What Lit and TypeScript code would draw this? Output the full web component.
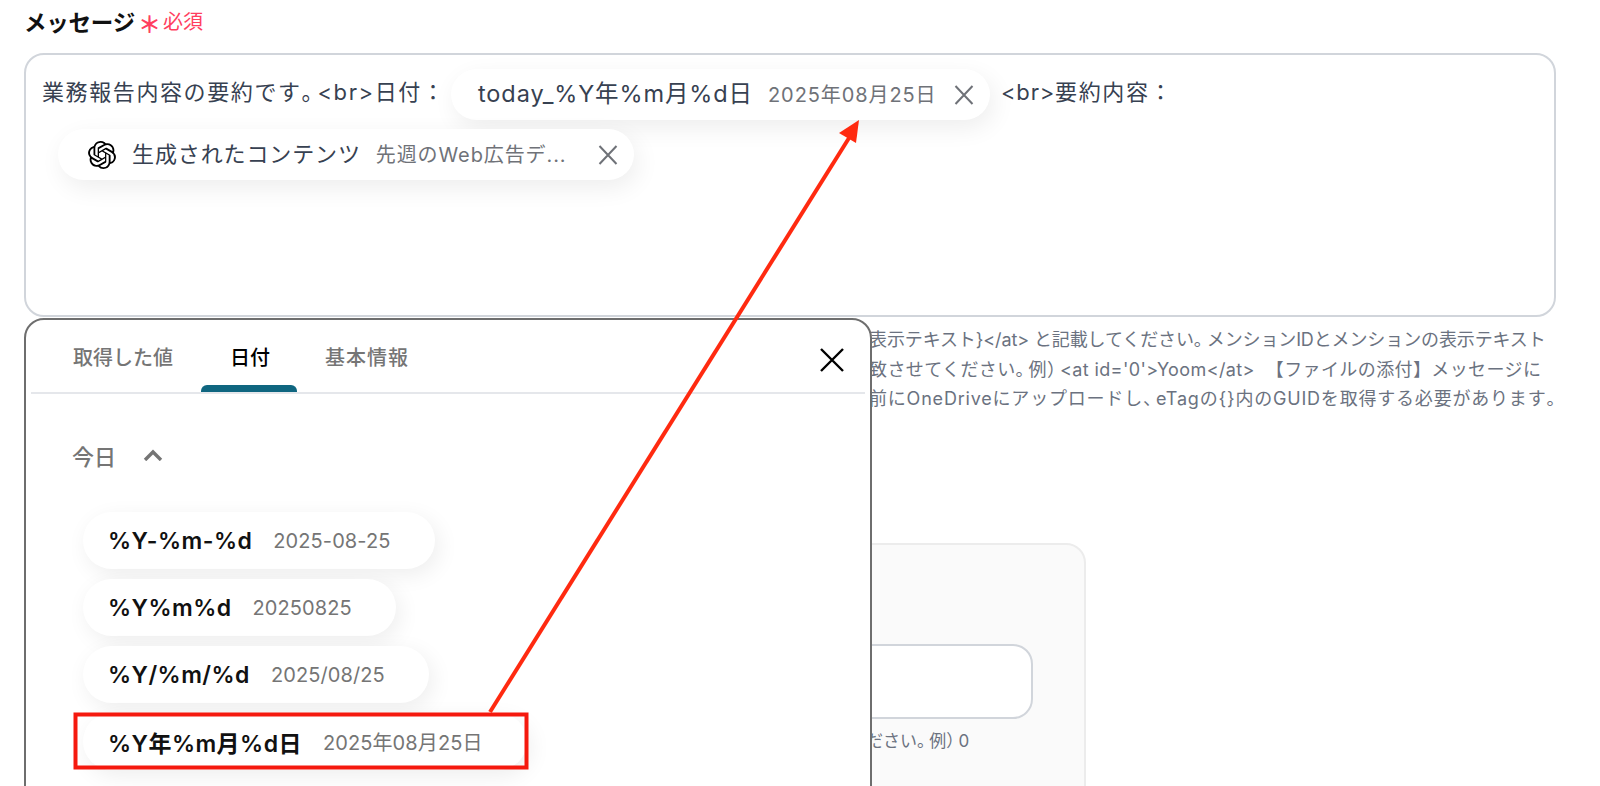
import { LitElement, html, css } from "lit";
import { customElement } from "lit/decorators.js";

const xIcon = (cls: string) => html`<svg class=${cls} viewBox="0 0 20 20" fill="none" stroke="currentColor" stroke-width="2"><path d="M1.5 1 L18.5 19 M18.5 1 L1.5 19"/></svg>`;
const pills = [
  ["%Y-%m-%d", "2025-08-25"],
  ["%Y%m%d", "20250825"],
  ["%Y/%m/%d", "2025/08/25"],
  ["%Y年%m月%d日", "2025年08月25日"],
];

@customElement("app-root")
export class AppRoot extends LitElement {
  static styles = css`
    :host { display: block; position: relative; width: 1600px; height: 786px; overflow: hidden; background: #fff;
      font-family: Inter, "Noto Sans CJK JP", sans-serif; color: #374151; }
    .label { display: flex; align-items: center; height: 53px; padding: 0 0 12px 24px; box-sizing: border-box; }
    .label b { font-size: 22.5px; font-weight: 700; color: #111; letter-spacing: -.01em; }
    .aster { color: #ff3f5f; font-size: 23px; line-height: 20px; margin: 8px 2px 0 3px; font-weight: 700; }
    .req { color: #ff3f5f; font-size: 20px; }
    .box { margin-left: 24px; width: 1532px; height: 264px; box-sizing: border-box; border: 2px solid #d1d5db; border-radius: 20px;
      padding: 14px 16px; }
    .line1 { display: flex; align-items: flex-start; height: 52px; font-size: 22px; line-height: 47px; letter-spacing: 1.6px; white-space: nowrap; }
    .lead { flex: none; width: 409px; }
    .la { letter-spacing: .8px; }
    .p { letter-spacing: -.28em; }
    .line2 { margin-top: 8px; padding-left: 16px; display: flex; }
    .chip { display: inline-flex; align-items: center; height: 51px; border-radius: 26px; background: #fff; box-sizing: border-box;
      box-shadow: 4px 8px 24px rgba(0,0,0,.07); letter-spacing: 0; flex: none; }
    .c1 { width: 539px; margin: 0 11px 0 0; padding-left: 27px; }
    .c2 { width: 576px; padding-left: 30px; }
    .ct { font-size: 22px; letter-spacing: .88px; color: #374151; margin-bottom: 1px; line-height: 30px; }
    .c1 .ct { font-size: 23.5px; letter-spacing: .9px; }
    .cv { font-size: 20px; letter-spacing: .9px; color: #6f7278; margin: 0 0 0 15px; line-height: 30px; }
    .c1 .x { margin-left: 18px; }
    .c2 .x { margin-left: 31px; }
    .c2 svg.logo { width: 28px; height: 28px; margin-right: 16px; color: #000; }
    .x { width: 20px; height: 20px; color: #6f7278; flex: none; }
    .help { margin: 8px 0 0 869px; font-size: 18px; line-height: 29.5px; color: #6b7280; white-space: nowrap; }
    .l1 { letter-spacing: -.12px; }
    .l2 { letter-spacing: .39px; }
    .l3 { letter-spacing: .8px; }
    .card { position: absolute; left: 24px; top: 543px; width: 1062px; height: 300px; box-sizing: border-box;
      background: #fafafa; border: 2px solid #ececec; border-radius: 20px; display: flex; flex-direction: column; align-items: flex-end; padding: 99px 51px 0 0; }
    .input { width: 500px; height: 75px; background: #fff; border: 2px solid #d1d5db; border-radius: 20px; box-sizing: border-box; flex: none; }
    .hint { align-self: flex-start; margin: 8px 0 0 840px; font-size: 17px; color: #6b7280; white-space: nowrap; line-height: 28px; }
    .panel { position: absolute; left: 24px; top: 318px; width: 848px; height: 500px; box-sizing: border-box; background: #fff;
      border: 2px solid #6e6e6e; border-radius: 20px; }
    .tabs { display: flex; align-items: flex-start; margin: 0 5px; height: 72px; border-bottom: 2px solid #e5e7eb; padding-left: 42px; position: relative; }
    .tab { font-size: 20px; font-weight: 500; color: #757575; margin-top: 23px; line-height: 30px; white-space: nowrap; }
    .tab.on { color: #000; margin-left: 57px; margin-right: 55px; position: relative; }
    .tab.on::after { content: ""; position: absolute; left: -29px; right: -27px; top: 42px; height: 7px; background: #0f6680; border-radius: 6px 6px 0 0; }
    .tab.wide { letter-spacing: 1px; }
    .close { position: absolute; right: 26px; top: 28px; width: 24px; height: 24px; color: #000; }
    .today { display: flex; align-items: center; margin: 46px 0 0 46px; height: 30px; font-size: 22px; font-weight: 500; color: #757575; }
    .today svg { width: 20px; height: 12px; margin-left: 27px; }
    .list { margin: 42px 0 0 57px; display: flex; flex-direction: column; align-items: flex-start; gap: 10px; }
    .pill { display: flex; align-items: center; height: 57px; padding: 0 44px 0 25px; border-radius: 29px; background: #fff;
      box-shadow: 4px 6px 22px rgba(0,0,0,.07); white-space: nowrap; }
    .pill b { font-size: 23px; font-weight: 600; color: #111; letter-spacing: .02em; }
    .pill span { font-size: 20px; color: #757575; margin: 0 0 0 21px; letter-spacing: .1px; }
    .overlay { position: absolute; inset: 0; width: 1600px; height: 786px; pointer-events: none; }
  `;

  render() {
    return html`
      <div class="label"><b>メッセージ</b><span class="aster">＊</span><span class="req">必須</span></div>
      <div class="box">
        <div class="line1">
          <span class="lead">業務報告内容の要約です<span class="p">。</span>&lt;br&gt;日付<span class="p">：</span></span>
          <span class="chip c1"><span class="ct">today_%Y年%m月%d日</span><span class="cv">2025年08月25日</span>${xIcon("x")}</span>
          <span><span class="la">&lt;br&gt;</span>要約内容：</span>
        </div>
        <div class="line2">
          <span class="chip c2">
            <svg class="logo" viewBox="0 0 24 24" fill="currentColor"><path d="M22.2819 9.8211a5.9847 5.9847 0 0 0-.5157-4.9108 6.0462 6.0462 0 0 0-6.5098-2.9A6.0651 6.0651 0 0 0 4.9807 4.1818a5.9847 5.9847 0 0 0-3.9977 2.9 6.0462 6.0462 0 0 0 .7427 7.0966 5.98 5.98 0 0 0 .511 4.9107 6.051 6.051 0 0 0 6.5146 2.9001A5.9847 5.9847 0 0 0 13.2599 24a6.0557 6.0557 0 0 0 5.7718-4.2058 5.9894 5.9894 0 0 0 3.9977-2.9001 6.0557 6.0557 0 0 0-.7475-7.0729zm-9.022 12.6081a4.4755 4.4755 0 0 1-2.8764-1.0408l.1419-.0804 4.7783-2.7582a.7948.7948 0 0 0 .3927-.6813v-6.7369l2.02 1.1686a.071.071 0 0 1 .038.052v5.5826a4.504 4.504 0 0 1-4.4945 4.4944zm-9.6607-4.1254a4.4708 4.4708 0 0 1-.5346-3.0137l.142.0852 4.783 2.7582a.7712.7712 0 0 0 .7806 0l5.8428-3.3685v2.3324a.0804.0804 0 0 1-.0332.0615L9.74 19.9502a4.4992 4.4992 0 0 1-6.1408-1.6464zM2.3408 7.8956a4.485 4.485 0 0 1 2.3655-1.9728V11.6a.7664.7664 0 0 0 .3879.6765l5.8144 3.3543-2.0201 1.1685a.0757.0757 0 0 1-.071 0l-4.8303-2.7865A4.504 4.504 0 0 1 2.3408 7.872zm16.5963 3.8558L13.1038 8.364 15.1192 7.2a.0757.0757 0 0 1 .071 0l4.8303 2.7913a4.4944 4.4944 0 0 1-.6765 8.1042v-5.6772a.79.79 0 0 0-.407-.667zm2.0107-3.0231l-.142-.0852-4.7735-2.7818a.7759.7759 0 0 0-.7854 0L9.409 9.2297V6.8974a.0662.0662 0 0 1 .0284-.0615l4.8303-2.7866a4.4992 4.4992 0 0 1 6.6802 4.66zM8.3065 12.863l-2.02-1.1638a.0804.0804 0 0 1-.038-.0567V6.0742a4.4992 4.4992 0 0 1 7.3757-3.4537l-.142.0805L8.704 5.459a.7948.7948 0 0 0-.3927.6813zm1.0976-2.3654l2.602-1.4998 2.6069 1.4998v2.9994l-2.5974 1.4997-2.6067-1.4997Z"/></svg>
            <span class="ct">生成されたコンテンツ</span><span class="cv">先週のWeb広告デ...</span>${xIcon("x")}
          </span>
        </div>
      </div>
      <div class="help">
        <div class="l1">表示テキスト}&lt;/at&gt; と記載してください<span class="p">。</span>メンションIDとメンションの表示テキスト</div>
        <div class="l2">致させてください<span class="p">。</span>例<span class="p">）</span>&lt;at id='0'&gt;Yoom&lt;/at&gt;&nbsp;&nbsp;【ファイルの添付】メッセージに</div>
        <div class="l3">前にOneDriveにアップロードし<span class="p">、</span>eTagの{}内のGUIDを取得する必要があります<span class="p">。</span></div>
      </div>
      <div class="card">
        <div class="input"></div>
        <div class="hint">ださい<span class="p">。</span>例<span class="p">）</span>0</div>
      </div>
      <div class="panel">
        <div class="tabs">
          <span class="tab">取得した値</span><span class="tab on">日付</span><span class="tab wide">基本情報</span>
        </div>
        <svg class="close" viewBox="0 0 24 24" fill="none" stroke="currentColor" stroke-width="2.4"><path d="M1 1 L23 23 M23 1 L1 23"/></svg>
        <div class="today">今日<svg viewBox="0 0 20 12" fill="none" stroke="currentColor" stroke-width="3.4"><path d="M2 11 L10 3 L18 11"/></svg></div>
        <div class="list">
          ${pills.map(([a, b]) => html`<div class="pill"><b>${a}</b><span>${b}</span></div>`)}
        </div>
      </div>
      <svg class="overlay" viewBox="0 0 1600 786">
        <rect x="75.5" y="714.5" width="451" height="53" fill="none" stroke="#f5190e" stroke-width="4"/>
        <path d="M490 712 L849 138" stroke="#ff2a10" stroke-width="4" fill="none"/>
        <path d="M859 120 L839 133 L856 143 Z" fill="#ff2a10"/>
      </svg>
    `;
  }
}
